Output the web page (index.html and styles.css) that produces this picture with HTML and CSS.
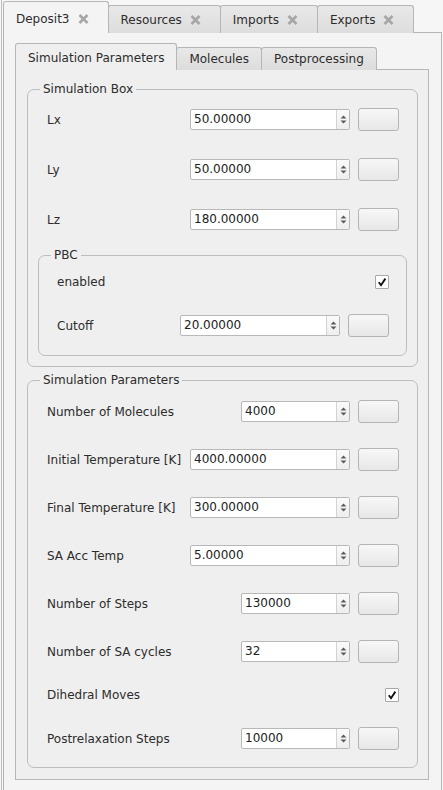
FILE: index.html
```html
<!DOCTYPE html>
<html>
<head>
<meta charset="utf-8">
<link rel="stylesheet" href="styles.css">
</head>
<body>
<div class="frame">
  <div class="tabwidget outer">
    <div class="tabbar">
      <div class="tab active">Deposit3 <svg class="close" width="11" height="10" viewBox="0 0 11 10"><path d="M1.5 1 L9.5 9 M9.5 1 L1.5 9"/></svg></div>
      <div class="tab">Resources <svg class="close" width="11" height="10" viewBox="0 0 11 10"><path d="M1.5 1 L9.5 9 M9.5 1 L1.5 9"/></svg></div>
      <div class="tab">Imports <svg class="close" width="11" height="10" viewBox="0 0 11 10"><path d="M1.5 1 L9.5 9 M9.5 1 L1.5 9"/></svg></div>
      <div class="tab">Exports <svg class="close" width="11" height="10" viewBox="0 0 11 10"><path d="M1.5 1 L9.5 9 M9.5 1 L1.5 9"/></svg></div>
    </div>
    <div class="pane">
      <div class="tabwidget inner">
        <div class="tabbar">
          <div class="tab active">Simulation Parameters</div>
          <div class="tab">Molecules</div>
          <div class="tab">Postprocessing</div>
        </div>
        <div class="inner-pane">
          <fieldset class="group simbox">
            <legend>Simulation Box</legend>
            <div class="rows box-rows">
              <div class="row"><span class="label">Lx</span><div class="spin"><span class="value">50.00000</span><span class="arrows"><svg width="7" height="11" viewBox="0 0 7 11"><path d="M0.5 4.5 L3.5 1.5 L6.5 4.5 Z M0.5 6.5 L3.5 9.5 L6.5 6.5 Z"/></svg></span></div><div class="btn"></div></div>
              <div class="row"><span class="label">Ly</span><div class="spin"><span class="value">50.00000</span><span class="arrows"><svg width="7" height="11" viewBox="0 0 7 11"><path d="M0.5 4.5 L3.5 1.5 L6.5 4.5 Z M0.5 6.5 L3.5 9.5 L6.5 6.5 Z"/></svg></span></div><div class="btn"></div></div>
              <div class="row"><span class="label">Lz</span><div class="spin"><span class="value">180.00000</span><span class="arrows"><svg width="7" height="11" viewBox="0 0 7 11"><path d="M0.5 4.5 L3.5 1.5 L6.5 4.5 Z M0.5 6.5 L3.5 9.5 L6.5 6.5 Z"/></svg></span></div><div class="btn"></div></div>
            </div>
            <fieldset class="group pbc">
              <legend>PBC</legend>
              <div class="rows pbc-rows">
                <div class="row"><span class="label">enabled</span><span class="check"><svg width="12" height="12" viewBox="0 0 12 12"><path d="M2.8 6.2 L5 9.2 L9.4 2.6"/></svg></span></div>
                <div class="row"><span class="label">Cutoff</span><div class="spin"><span class="value">20.00000</span><span class="arrows"><svg width="7" height="11" viewBox="0 0 7 11"><path d="M0.5 4.5 L3.5 1.5 L6.5 4.5 Z M0.5 6.5 L3.5 9.5 L6.5 6.5 Z"/></svg></span></div><div class="btn"></div></div>
              </div>
            </fieldset>
          </fieldset>

          <fieldset class="group simparams">
            <legend>Simulation Parameters</legend>
            <div class="rows param-rows">
              <div class="row"><span class="label">Number of Molecules</span><div class="spin int"><span class="value">4000</span><span class="arrows"><svg width="7" height="11" viewBox="0 0 7 11"><path d="M0.5 4.5 L3.5 1.5 L6.5 4.5 Z M0.5 6.5 L3.5 9.5 L6.5 6.5 Z"/></svg></span></div><div class="btn"></div></div>
              <div class="row"><span class="label">Initial Temperature [K]</span><div class="spin"><span class="value">4000.00000</span><span class="arrows"><svg width="7" height="11" viewBox="0 0 7 11"><path d="M0.5 4.5 L3.5 1.5 L6.5 4.5 Z M0.5 6.5 L3.5 9.5 L6.5 6.5 Z"/></svg></span></div><div class="btn"></div></div>
              <div class="row"><span class="label">Final Temperature [K]</span><div class="spin"><span class="value">300.00000</span><span class="arrows"><svg width="7" height="11" viewBox="0 0 7 11"><path d="M0.5 4.5 L3.5 1.5 L6.5 4.5 Z M0.5 6.5 L3.5 9.5 L6.5 6.5 Z"/></svg></span></div><div class="btn"></div></div>
              <div class="row"><span class="label">SA Acc Temp</span><div class="spin"><span class="value">5.00000</span><span class="arrows"><svg width="7" height="11" viewBox="0 0 7 11"><path d="M0.5 4.5 L3.5 1.5 L6.5 4.5 Z M0.5 6.5 L3.5 9.5 L6.5 6.5 Z"/></svg></span></div><div class="btn"></div></div>
              <div class="row"><span class="label">Number of Steps</span><div class="spin int"><span class="value">130000</span><span class="arrows"><svg width="7" height="11" viewBox="0 0 7 11"><path d="M0.5 4.5 L3.5 1.5 L6.5 4.5 Z M0.5 6.5 L3.5 9.5 L6.5 6.5 Z"/></svg></span></div><div class="btn"></div></div>
              <div class="row"><span class="label">Number of SA cycles</span><div class="spin int"><span class="value">32</span><span class="arrows"><svg width="7" height="11" viewBox="0 0 7 11"><path d="M0.5 4.5 L3.5 1.5 L6.5 4.5 Z M0.5 6.5 L3.5 9.5 L6.5 6.5 Z"/></svg></span></div><div class="btn"></div></div>
              <div class="row row-check"><span class="label">Dihedral Moves</span><span class="check"><svg width="12" height="12" viewBox="0 0 12 12"><path d="M2.8 6.2 L5 9.2 L9.4 2.6"/></svg></span></div>
              <div class="row row-last"><span class="label">Postrelaxation Steps</span><div class="spin int"><span class="value">10000</span><span class="arrows"><svg width="7" height="11" viewBox="0 0 7 11"><path d="M0.5 4.5 L3.5 1.5 L6.5 4.5 Z M0.5 6.5 L3.5 9.5 L6.5 6.5 Z"/></svg></span></div><div class="btn"></div></div>
            </div>
          </fieldset>
        </div>
      </div>
    </div>
  </div>
</div>
</body>
</html>
```

FILE: styles.css
```css
* { box-sizing: border-box; }
html, body { margin: 0; padding: 0; }
body {
  width: 443px;
  height: 790px;
  overflow: hidden;
  background: #f6f6f6;
  font-family: "DejaVu Sans", "Liberation Sans", sans-serif;
  font-size: 12px;
  color: #2c2c2c;
}
.frame {
  height: 790px;
  margin-left: 1px;
  border-left: 1px solid #bdbdbd;
  padding: 0 1px;
  display: flex;
  flex-direction: column;
}
.tabwidget { display: flex; flex-direction: column; }
.outer { flex: 1; min-height: 0; }
.tabbar {
  display: flex;
  align-items: flex-end;
  position: relative;
  z-index: 1;
}
.outer > .tabbar { height: 33px; margin-bottom: -1px; }
.inner > .tabbar { height: 27px; margin-bottom: -1px; }
.tab {
  display: flex;
  align-items: center;
  gap: 8px;
  border: 1px solid #b6b6b6;
  border-bottom: none;
  border-radius: 3px 3px 0 0;
  background: linear-gradient(#e8e8e8, #dddddd);
  margin-left: -1px;
  white-space: nowrap;
}
.tab:first-child { margin-left: 0; }
.tab.active { position: relative; z-index: 2; }
.outer > .tabbar > .tab { height: 28px; padding: 0 19px 0 12px; }
.outer > .tabbar > .tab.active { height: 32px; background: #f4f4f4; padding-top: 2px; }
.inner > .tabbar > .tab { height: 23px; padding: 0 12px 0 12px; }
.inner > .tabbar > .tab.active { height: 27px; background: #efefef; padding-top: 1px; }
.close path { stroke: #a6a6a6; stroke-width: 2.6; fill: none; }
.pane {
  flex: 1;
  border: 1px solid #b6b6b6;
  border-bottom: none;
  background: #f4f4f4;
  padding: 10px 12px 0 11px;
}
.inner-pane {
  border: 1px solid #b6b6b6;
  background: #efefef;
  padding: 12px 10px 11px 11px;
}
fieldset.group {
  margin: 0;
  min-width: 0;
  border: 1px solid #bdbdbd;
  border-radius: 7px;
  padding: 12px 10px 10px;
}
fieldset.group legend {
  padding: 0 3px;
  margin-left: 2px;
  line-height: 14px;
}
.rows { display: flex; flex-direction: column; }
.box-rows { gap: 27px; }
fieldset.group.pbc { margin-top: 17px; padding-top: 8px; padding-bottom: 18px; }
.pbc-rows { gap: 21px; }
.pbc-rows .row { padding: 0 7px 0 8px; }
fieldset.group.simparams { margin-top: 6px; padding-top: 13px; padding-bottom: 17px; }
.param-rows { gap: 25px; }
.param-rows .row-check { margin-top: -5px; }
.param-rows .row-last { margin-top: -4px; }
.row {
  display: flex;
  align-items: center;
  height: 23px;
  padding: 0 8px 0 9px;
}
.label { flex: 1; white-space: nowrap; }
.spin {
  display: flex;
  width: 160px;
  height: 21px;
  border: 1px solid #b8b8b8;
  border-radius: 2px;
  background: #ffffff;
}
.spin.int { width: 109px; }
.spin .value { flex: 1; padding-left: 3px; line-height: 19px; color: #222; }
.spin .arrows {
  width: 13px;
  border-left: 1px solid #d3d3d3;
  background: linear-gradient(#fafafa, #eeeeee);
  display: flex;
  align-items: center;
  justify-content: center;
}
.spin .arrows path { fill: #5c5c5c; }
.btn {
  width: 41px;
  height: 23px;
  margin-left: 8px;
  border: 1px solid #b4b4b4;
  border-radius: 3px;
  background: linear-gradient(#f7f7f7, #e7e7e7);
}
.check {
  width: 14px;
  height: 14px;
  border: 1px solid #a8a8a8;
  border-radius: 1px;
  background: #ffffff;
  display: flex;
  align-items: center;
  justify-content: center;
}
.check path { stroke: #111; stroke-width: 1.9; fill: none; }
```
